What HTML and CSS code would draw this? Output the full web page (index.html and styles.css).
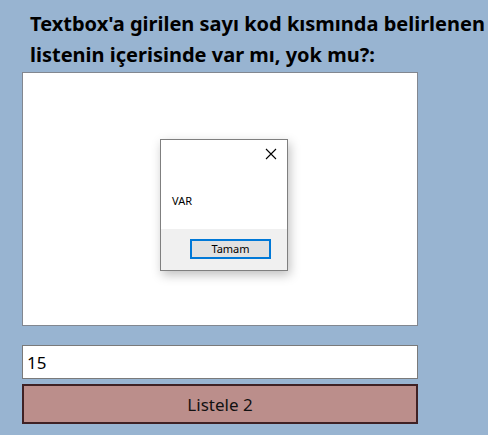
FILE: index.html
```html
<!DOCTYPE html>
<html lang="tr">
<head>
<meta charset="utf-8">
<title>Liste</title>
<link rel="stylesheet" href="styles.css">
</head>
<body>
<div class="page">
  <h1 class="title">Textbox'a girilen sayı kod kısmında belirlenen listenin içerisinde var mı, yok mu?:</h1>
  <div class="listbox"></div>
  <input class="textbox" type="text" value="15">
  <button class="action">Listele 2</button>
</div>
<div class="dialog">
  <div class="dialog-body">
    <div class="dialog-top">
      <svg class="close" width="12" height="12" viewBox="0 0 12 12"><path d="M1 1L11 11M11 1L1 11" stroke="#000" stroke-width="1.1" fill="none"/></svg>
    </div>
    <div class="dialog-msg">VAR</div>
  </div>
  <div class="dialog-foot">
    <button class="ok">Tamam</button>
  </div>
</div>
</body>
</html>
```
FILE: styles.css
```css
html, body {
  margin: 0;
  padding: 0;
  background: #98b4d1;
  width: 488px;
  height: 435px;
  overflow: hidden;
}
.page {
  display: flex;
  flex-direction: column;
  padding: 8px 0 0 22px;
  font-family: "Noto Sans", "Open Sans", sans-serif;
}
.title {
  margin: 0 0 0 8px;
  font-size: 20px;
  font-weight: bold;
  line-height: 31px;
  color: #000;
  width: 466px;
}
.listbox {
  margin-top: 2px;
  width: 394px;
  height: 252px;
  background: #fff;
  border: 1px solid #828790;
}
.textbox {
  margin: 19px 0 0 0;
  height: 32px;
  box-sizing: content-box;
  padding: 0 0 0 4px;
  border: 1px solid #7a7a7a;
  background: #fff;
  font-family: "Noto Sans", "Open Sans", sans-serif;
  font-size: 17px;
  color: #000;
  outline: none;
  width: 390px;
}
.action {
  margin-top: 5px;
  width: 396px;
  height: 40px;
  background: #bb8e8b;
  border: 2px solid #3f2124;
  font-family: "Noto Sans", "Open Sans", sans-serif;
  font-size: 17px;
  color: #111;
  padding: 0;
}
.dialog {
  position: absolute;
  left: 160px;
  top: 139px;
  width: 126px;
  height: 130px;
  border: 1px solid #7f7f7f;
  background: #fff;
  box-shadow: 2px 4px 10px rgba(0,0,0,0.25);
  display: flex;
  flex-direction: column;
  font-family: "Noto Sans", "Open Sans", sans-serif;
}
.dialog-body {
  height: 89px;
  display: flex;
  flex-direction: column;
}
.dialog-top {
  display: flex;
  justify-content: flex-end;
  padding: 8px 10px 0 0;
}
.dialog-msg {
  margin: 33px 0 0 11px;
  font-size: 11px;
  color: #000;
}
.dialog-foot {
  flex: 1;
  background: #f0f0f0;
  display: flex;
  justify-content: flex-end;
  align-items: flex-start;
  padding: 10px 16px 0 0;
}
.ok {
  width: 81px;
  height: 20px;
  border: 2px solid #0078d7;
  background: #e1e1e1;
  font-family: "Noto Sans", "Open Sans", sans-serif;
  font-size: 11px;
  color: #000;
  padding: 0;
  line-height: 14px;
}
```
